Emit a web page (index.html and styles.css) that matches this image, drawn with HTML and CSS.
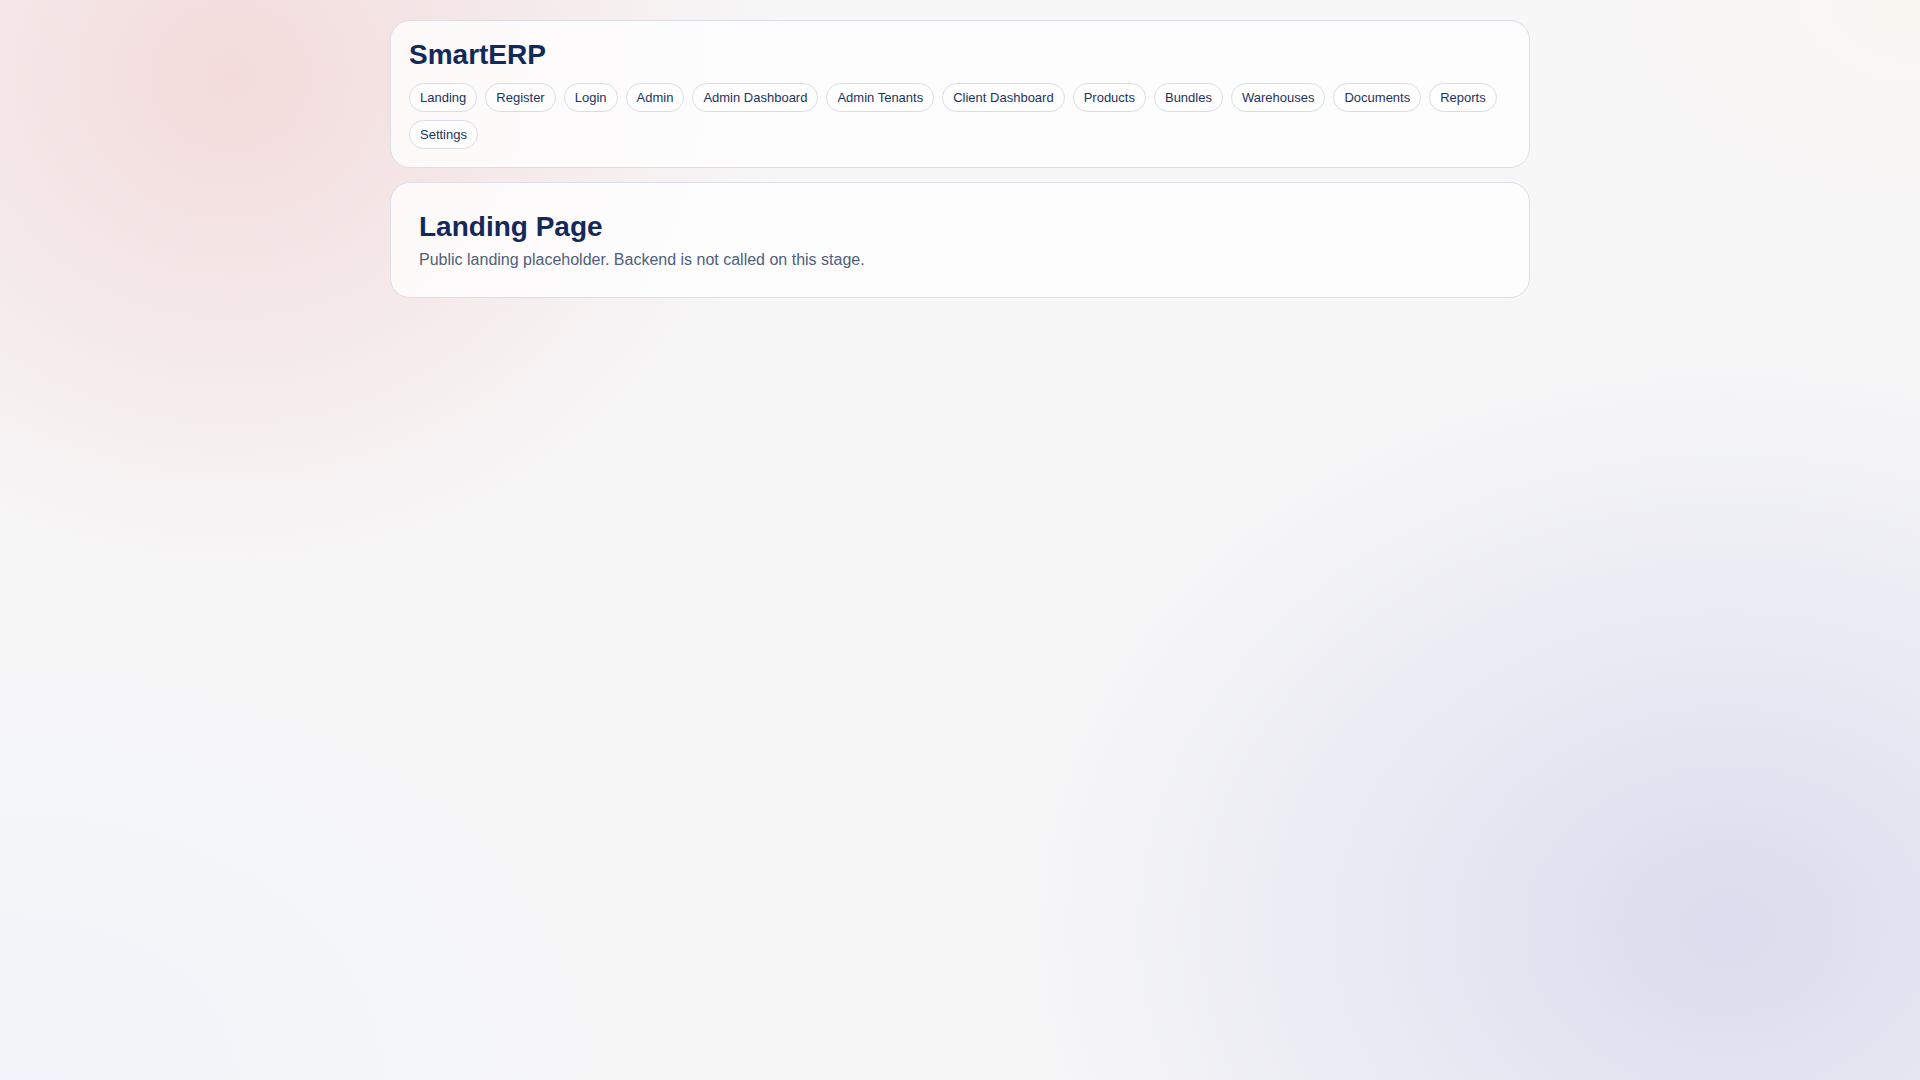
FILE: index.html
```html
<!DOCTYPE html>
<html lang="en">
<head>
<meta charset="utf-8">
<title>SmartERP</title>
<link rel="stylesheet" href="styles.css">
</head>
<body>
<div class="page">
  <header class="card header">
    <h1 class="brand">SmartERP</h1>
    <nav class="nav">
      <a class="pill" href="#">Landing</a>
      <a class="pill" href="#">Register</a>
      <a class="pill" href="#">Login</a>
      <a class="pill" href="#">Admin</a>
      <a class="pill" href="#">Admin Dashboard</a>
      <a class="pill" href="#">Admin Tenants</a>
      <a class="pill" href="#">Client Dashboard</a>
      <a class="pill" href="#">Products</a>
      <a class="pill" href="#">Bundles</a>
      <a class="pill" href="#">Warehouses</a>
      <a class="pill" href="#">Documents</a>
      <a class="pill" href="#">Reports</a>
      <a class="pill" href="#">Settings</a>
    </nav>
  </header>
  <main class="card content">
    <h2 class="title">Landing Page</h2>
    <p class="lead">Public landing placeholder. Backend is not called on this stage.</p>
  </main>
</div>
</body>
</html>
```
FILE: styles.css
```css
html, body {
  margin: 0;
  padding: 0;
}

body {
  min-height: 100vh;
  font-family: "Liberation Sans", Arial, sans-serif;
  background:
    radial-gradient(ellipse 560px 520px at 12% 7%, rgba(242, 212, 212, 0.8), rgba(242, 212, 212, 0) 100%),
    radial-gradient(ellipse 720px 580px at 90% 86%, rgba(214, 216, 236, 0.85), rgba(214, 216, 236, 0) 100%),
    radial-gradient(ellipse 380px 260px at 100% 0%, rgba(253, 246, 238, 0.6), rgba(253, 246, 238, 0) 100%),
    radial-gradient(ellipse 600px 420px at 0% 100%, rgba(240, 243, 250, 0.9), rgba(240, 243, 250, 0) 100%),
    #f7f7f8;
}

.page {
  max-width: 1140px;
  margin: 0 auto;
  padding: 20px 0;
  display: flex;
  flex-direction: column;
  gap: 14px;
}

.card {
  background: rgba(255, 255, 255, 0.78);
  border: 1px solid #dcdfe8;
  border-radius: 20px;
}

.header {
  padding: 18px;
}

.brand {
  margin: 0 0 12px;
  font-size: 28px;
  font-weight: 700;
  line-height: 32px;
  color: #13295a;
}

.nav {
  display: flex;
  flex-wrap: wrap;
  gap: 8px;
}

.pill {
  display: inline-block;
  padding: 6px 10px;
  font-size: 13px;
  line-height: 15px;
  color: #1c3461;
  text-decoration: none;
  background: rgba(255, 255, 255, 0.6);
  border: 1px solid #dadde8;
  border-radius: 999px;
}

.content {
  padding: 28px;
}

.title {
  margin: 0 0 8px;
  font-size: 28px;
  font-weight: 700;
  line-height: 32px;
  color: #13295a;
}

.lead {
  margin: 0;
  font-size: 16px;
  line-height: 18px;
  color: #4f5f7b;
}
```
